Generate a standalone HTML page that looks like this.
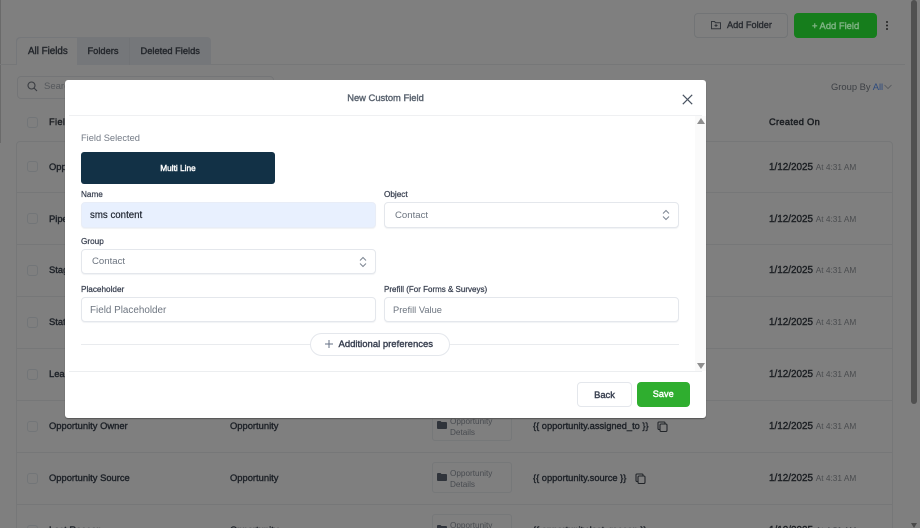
<!DOCTYPE html>
<html><head><meta charset="utf-8">
<style>
*{box-sizing:border-box}
html,body{margin:0;padding:0;width:920px;height:528px;overflow:hidden}
#page{position:absolute;left:0;top:0;width:920px;height:528px;overflow:hidden;background:#7f7f7f;font-family:"Liberation Sans",sans-serif;color:#1d2125}
.a{position:absolute;white-space:nowrap}
.m{-webkit-text-stroke:.4px currentColor}
.cb{position:absolute;left:27px;width:11px;height:11px;border:1px solid #727578;border-radius:3px}
.name{position:absolute;left:49px;font-size:9.4px;color:#1f2329;white-space:nowrap;-webkit-text-stroke:.4px #1f2329}
.obj{position:absolute;left:230px;font-size:9.4px;color:#1f2329;-webkit-text-stroke:.4px #1f2329}
.date{position:absolute;left:769px;font-size:9.9px;color:#1d2024;white-space:nowrap;-webkit-text-stroke:.4px #1d2024}
.date span{font-size:8.3px;color:#4a4c4f;-webkit-text-stroke:0}
.folder{position:absolute;left:432px;width:80px;height:31px;border:1px solid #767879;border-radius:3px}
.folder svg{position:absolute;left:4px;top:10px}
.folder b{position:absolute;left:17px;top:5px;font-size:8.2px;line-height:11px;font-weight:400;color:#484b50}
.key{position:absolute;left:533px;font-size:9.3px;color:#1f2329;white-space:nowrap;-webkit-text-stroke:.4px #1f2329}
.rl{position:absolute;left:16px;width:877px;height:1px;background:#767778}
.modal{position:absolute;left:65px;top:80px;width:641px;height:338px;background:#fff;border-radius:3px;box-shadow:0 1px 1px #555}
.label{position:absolute;font-size:8.2px;color:#3b4252;-webkit-text-stroke:.25px #3b4252;white-space:nowrap}
.inp{position:absolute;height:25px;border:1px solid #e4e7ec;border-radius:4px;background:#fff;font-size:9.6px;line-height:25px;color:#6d7580;padding-left:8px;box-shadow:0 1px 1px #f1f2f4;white-space:nowrap}
</style></head><body>
<div id="page">

<div class="a" style="left:0;top:0;width:1px;height:143px;background:#6a6a6a"></div>
<div class="a" style="left:0;top:64px;width:905px;height:1px;background:#767778"></div>

<div class="a" style="left:16px;top:37px;width:195px;height:28px;background:#75777a;border-radius:4px 4px 0 0"></div>
<div class="a" style="left:17px;top:38px;width:60px;height:27px;background:#7f7f7f;border-radius:4px 0 0 0"></div>
<div class="a" style="left:129px;top:38px;width:1px;height:27px;background:#717376"></div>
<div class="a m" style="left:28px;top:46px;font-size:9.8px;color:#25282d">All Fields</div>
<div class="a m" style="left:87.5px;top:46px;font-size:9.3px;color:#25282d">Folders</div>
<div class="a m" style="left:140.5px;top:46px;font-size:9.3px;color:#25282d">Deleted Fields</div>

<div class="a" style="left:694px;top:13px;width:94px;height:25px;border:1px solid #727476;border-radius:4px"></div>
<svg class="a" style="left:710px;top:19px" width="12" height="12" viewBox="0 0 12 12" fill="none" stroke="#33363b" stroke-width="1"><path d="M1.500 2.500h3l1 1.200h5v6h-9z"/><path d="M6 5v3M4.500 6.500h3"/></svg>
<div class="a m" style="left:727px;top:20px;font-size:9.2px;color:#2b2e33">Add Folder</div>
<div class="a" style="left:794px;top:13px;width:83px;height:25px;background:#167d1c;border-radius:4px"></div>
<div class="a m" style="left:812px;top:20px;font-size:9.4px;color:#7fb384">+ Add Field</div>
<svg class="a" style="left:885px;top:21px" width="4" height="9"><circle cx="2" cy="1" r="1" fill="#222"/><circle cx="2" cy="4.500" r="1" fill="#222"/><circle cx="2" cy="8" r="1" fill="#222"/></svg>

<div class="a" style="left:17px;top:76px;width:257px;height:23px;border:1px solid #747577;border-radius:4px"></div>
<svg class="a" style="left:27px;top:81px" width="11" height="11" viewBox="0 0 11 11" fill="none" stroke="#3a3d42" stroke-width="1.100"><circle cx="4.500" cy="4.500" r="3.500"/><path d="M7 7l3 3"/></svg>
<div class="a" style="left:44px;top:81px;font-size:9.500px;color:#55585c">Search</div>

<div class="a" style="left:831px;top:81px;font-size:9.400px;color:#3d4045">Group By <span style="color:#2c4a7e">All</span></div>
<svg class="a" style="left:884px;top:84px" width="8" height="6" fill="none" stroke="#55585c" stroke-width=".8"><path d="M.5 1l3.500 3.500L7.500 1"/></svg>

<div class="cb" style="top:117px"></div>
<div class="a m" style="left:49px;top:117px;font-size:9.300px;letter-spacing:.3px;color:#1d2024">Field Name</div>
<div class="a m" style="left:769px;top:117px;font-size:9.300px;letter-spacing:.3px;color:#1d2024;-webkit-text-stroke:.5px #1d2024">Created On</div>

<div class="a" style="left:16px;top:141px;width:877px;height:400px;border:1px solid #767778;border-radius:4px"></div>
<div class="rl" style="top:192px"></div><div class="rl" style="top:244px"></div><div class="rl" style="top:296px"></div><div class="rl" style="top:348px"></div><div class="rl" style="top:400px"></div><div class="rl" style="top:452px"></div><div class="rl" style="top:504px"></div>

<div class="cb" style="top:161px"></div><div class="name" style="top:161px">Opportunity Name</div>
<div class="cb" style="top:213px"></div><div class="name" style="top:213px">Pipeline</div>
<div class="cb" style="top:265px"></div><div class="name" style="top:264px">Stage</div>
<div class="cb" style="top:317px"></div><div class="name" style="top:316px">Status</div>
<div class="cb" style="top:369px"></div><div class="name" style="top:368px">Lead Value</div>
<div class="cb" style="top:421px"></div><div class="name" style="top:420px">Opportunity Owner</div>
<div class="cb" style="top:473px"></div><div class="name" style="top:472px">Opportunity Source</div>
<div class="cb" style="top:525px"></div><div class="name" style="top:524px">Lost Reason</div>

<div class="obj" style="top:420px">Opportunity</div>
<div class="obj" style="top:472px">Opportunity</div>
<div class="obj" style="top:524px">Opportunity</div>

<div class="folder" style="top:410px"><svg width="10" height="8" viewBox="0 0 10 8"><path d="M0 1a1 1 0 0 1 1-1h2.500l1 1H9a1 1 0 0 1 1 1v5a1 1 0 0 1-1 1H1a1 1 0 0 1-1-1z" fill="#30343b"/></svg><b>Opportunity<br>Details</b></div>
<div class="folder" style="top:462px"><svg width="10" height="8" viewBox="0 0 10 8"><path d="M0 1a1 1 0 0 1 1-1h2.500l1 1H9a1 1 0 0 1 1 1v5a1 1 0 0 1-1 1H1a1 1 0 0 1-1-1z" fill="#30343b"/></svg><b>Opportunity<br>Details</b></div>
<div class="folder" style="top:514px"><svg width="10" height="8" viewBox="0 0 10 8"><path d="M0 1a1 1 0 0 1 1-1h2.500l1 1H9a1 1 0 0 1 1 1v5a1 1 0 0 1-1 1H1a1 1 0 0 1-1-1z" fill="#30343b"/></svg><b>Opportunity<br>Details</b></div>

<div class="key" style="top:421px">{{ opportunity.assigned_to }}</div>
<svg class="a" style="left:657px;top:421px" width="11" height="11" viewBox="0 0 11 11" fill="none" stroke="#222529" stroke-width="1.100"><rect x="3" y="3" width="7" height="7.500" rx="1.200"/><path d="M3 8.500H2a1 1 0 0 1-1-1V2a1 1 0 0 1 1-1h5a1 1 0 0 1 1 1v1"/></svg>
<div class="key" style="top:473px">{{ opportunity.source }}</div>
<svg class="a" style="left:635px;top:473px" width="11" height="11" viewBox="0 0 11 11" fill="none" stroke="#222529" stroke-width="1.100"><rect x="3" y="3" width="7" height="7.500" rx="1.200"/><path d="M3 8.500H2a1 1 0 0 1-1-1V2a1 1 0 0 1 1-1h5a1 1 0 0 1 1 1v1"/></svg>
<div class="key" style="top:525px">{{ opportunity.lost_reason }}</div>

<div class="date" style="top:162px">1/12/2025 <span>At 4:31 AM</span></div>
<div class="date" style="top:214px">1/12/2025 <span>At 4:31 AM</span></div>
<div class="date" style="top:265px">1/12/2025 <span>At 4:31 AM</span></div>
<div class="date" style="top:317px">1/12/2025 <span>At 4:31 AM</span></div>
<div class="date" style="top:369px">1/12/2025 <span>At 4:31 AM</span></div>
<div class="date" style="top:421px">1/12/2025 <span>At 4:31 AM</span></div>
<div class="date" style="top:473px">1/12/2025 <span>At 4:31 AM</span></div>
<div class="date" style="top:525px">1/12/2025 <span>At 4:31 AM</span></div>

<div class="a" style="left:911px;top:0;width:6px;height:404px;background:#505050;border-radius:3px"></div>
<div class="a" style="left:911px;top:523px;width:0;height:0;border-left:3px solid transparent;border-right:3px solid transparent;border-top:5px solid #4a4a4a"></div>

<div class="modal">
  <div class="a m" style="left:0;width:641px;text-align:center;top:12px;font-size:9.400px;color:#5b6470">New Custom Field</div>
  <svg class="a" style="left:617px;top:14px" width="11" height="11" viewBox="0 0 11 11" fill="none" stroke="#4a5462" stroke-width="1.200"><path d="M.8.800l9.400 9.400M10.200.800L.8 10.200"/></svg>
  <div class="a" style="left:4px;top:35px;width:633px;height:1px;background:#eff0f2"></div>
  <div class="a" style="left:630px;top:36px;width:11px;height:255px;background:#fafafa"></div>
  <div class="a" style="left:632px;top:38px;width:0;height:0;border-left:4px solid transparent;border-right:4px solid transparent;border-bottom:6px solid #8f8f8f"></div>
  <div class="a" style="left:632px;top:283px;width:0;height:0;border-left:4px solid transparent;border-right:4px solid transparent;border-top:6px solid #8f8f8f"></div>

  <div class="a" style="left:16px;top:53px;font-size:9.300px;color:#737a85">Field Selected</div>
  <div class="a m" style="left:16px;top:71.500px;width:194px;height:32.500px;background:#123146;border-radius:3px;color:#fff;font-size:8.300px;line-height:32px;text-align:center">Multi Line</div>

  <div class="label" style="left:16px;top:110px">Name</div>
  <div class="inp" style="left:16px;top:122px;width:295px;height:25.500px;background:#e8f0fe;border-color:#e8edf7;color:#1f2530;font-size:9.700px;-webkit-text-stroke:.2px #1f2530">sms content</div>

  <div class="label" style="left:319px;top:110px">Object</div>
  <div class="inp" style="left:319px;top:122px;width:295px;height:25.500px;padding-left:10px">Contact
    <svg class="a" style="left:277px;top:6px" width="8" height="12" viewBox="0 0 8 12" fill="none" stroke="#7c8592" stroke-width="1"><path d="M1 4.500L4 1.500l3 3M1 7.500l3 3 3-3"/></svg></div>

  <div class="label" style="left:16px;top:157px">Group</div>
  <div class="inp" style="left:16px;top:169px;width:295px;padding-left:10px;line-height:24px">Contact
    <svg class="a" style="left:277px;top:6px" width="8" height="12" viewBox="0 0 8 12" fill="none" stroke="#7c8592" stroke-width="1"><path d="M1 4.500L4 1.500l3 3M1 7.500l3 3 3-3"/></svg></div>

  <div class="label" style="left:16px;top:205px">Placeholder</div>
  <div class="inp" style="left:16px;top:217px;width:295px;font-size:9.900px;line-height:26px">Field Placeholder</div>
  <div class="label" style="left:319px;top:205px;font-size:8px">Prefill (For Forms &amp; Surveys)</div>
  <div class="inp" style="left:319px;top:217px;width:295px;font-size:9.300px;line-height:25px">Prefill Value</div>

  <div class="a" style="left:16px;top:264px;width:598px;height:1px;background:#e9ebee"></div>
  <div class="a" style="left:245px;top:253px;width:140px;height:23px;background:#fff;border:1px solid #e4e7ec;border-radius:12px"></div>
  <svg class="a" style="left:260px;top:260px" width="8" height="8" stroke="#667085" stroke-width="1"><path d="M4 0v8M0 4h8"/></svg>
  <div class="a m" style="left:273.500px;top:259px;font-size:9.500px;color:#3b4252">Additional preferences</div>

  <div class="a" style="left:4px;top:291px;width:633px;height:1px;background:#eceef0"></div>
  <div class="a m" style="left:512px;top:302px;width:55px;height:25px;background:#fff;border:1px solid #e4e7ec;border-radius:4px;text-align:center;font-size:9.400px;line-height:24px;color:#3b4252">Back</div>
  <div class="a m" style="left:571.500px;top:302px;width:53.500px;height:25px;background:#2fae2f;border-radius:4px;text-align:center;font-size:9.200px;line-height:25px;color:#fff">Save</div>
</div>
</div>
</body></html>
